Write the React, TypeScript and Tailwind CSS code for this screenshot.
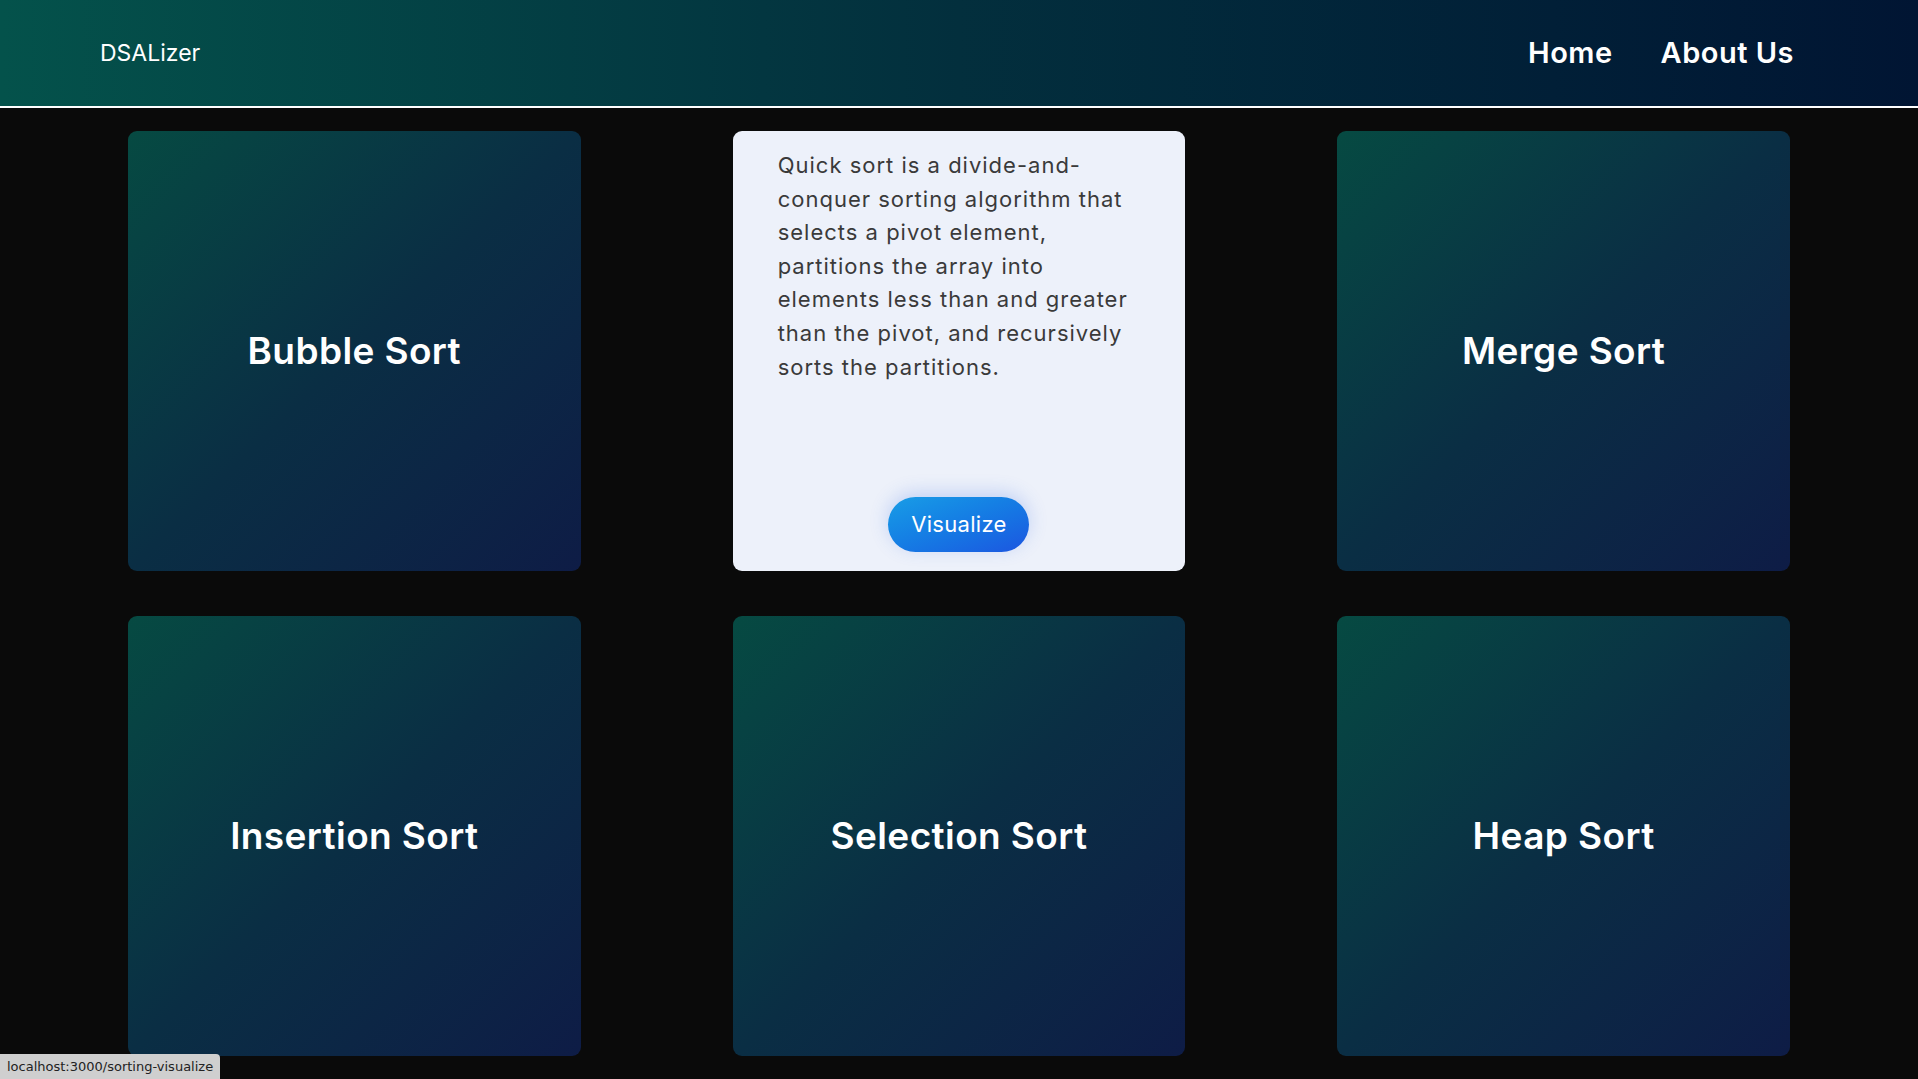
import React from "react";

const algos = ["Bubble Sort", "Quick Sort", "Merge Sort", "Insertion Sort", "Selection Sort", "Heap Sort"];

function AlgoCard({ name }: { name: string }) {
  return (
    <div className="flex h-[440px] items-center justify-center rounded-[9px] bg-gradient-to-br from-[#064a42] via-[#0a2e44] to-[#0e1c46]">
      <h2 className="text-[37px] font-semibold tracking-[0.4px] text-white">{name}</h2>
    </div>
  );
}

function QuickCard() {
  return (
    <div className="flex h-[440px] flex-col rounded-[9px] bg-[#edf1fa] px-[45px] pb-[19px] pt-[18px]">
      <p className="text-[22px] leading-[33.6px] tracking-[1px] text-[#3a3a3a]">
        Quick sort is a divide-and-conquer sorting algorithm that selects a pivot element, partitions the array into elements less than and greater than the pivot, and recursively sorts the partitions.
      </p>
      <div className="mt-auto flex justify-center">
        <button className="h-[55px] w-[141px] rounded-full bg-gradient-to-br from-[#1a9de6] to-[#1d55e0] text-[22px] tracking-[0.3px] text-white shadow-[0_-4px_18px_rgba(60,110,230,0.25)]">
          Visualize
        </button>
      </div>
    </div>
  );
}

export default function App() {
  return (
    <div className="relative min-h-[1079px] bg-[#0a0a0a] font-['Inter','Noto_Sans',sans-serif]">
      <header className="flex h-[108px] items-center justify-between border-b-2 border-white bg-gradient-to-r from-[#04524b] via-[#032f3d] to-[#011533] pl-[100px] pr-[124px]">
        <span className="text-[23px] tracking-[0px] text-white">DSALizer</span>
        <nav className="flex items-center gap-[48px] text-[29px] font-semibold tracking-[0.5px] text-white">
          <a href="#">Home</a>
          <a href="#">About Us</a>
        </nav>
      </header>

      <main className="grid grid-cols-3 gap-x-[152px] gap-y-[45px] px-[128px] pt-[23px]">
        {algos.map((a) => (a === "Quick Sort" ? <QuickCard key={a} /> : <AlgoCard key={a} name={a} />))}
      </main>

      <div className="fixed bottom-0 left-0 rounded-tr-[4px] bg-[#cfcfcf] px-[7px] py-[3px] font-['DejaVu_Sans','Liberation_Sans',sans-serif] text-[13px] text-[#222]">
        localhost:3000/sorting-visualize
      </div>
    </div>
  );
}
